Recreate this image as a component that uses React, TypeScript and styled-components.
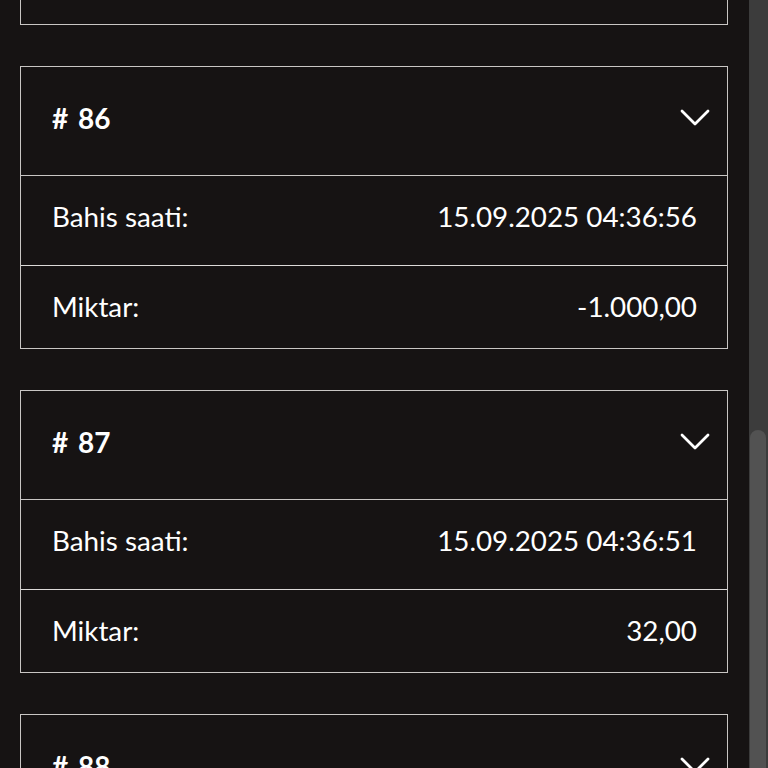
import React from 'react';
import styled, { createGlobalStyle } from 'styled-components';

const GlobalStyle = createGlobalStyle`
  html, body {
    margin: 0;
    padding: 0;
    height: 100%;
    overflow: hidden;
    background: #161313;
  }
  #root {
    height: 100%;
  }
`;

const Page = styled.div`
  display: flex;
  height: 768px;
  overflow: hidden;
  background: #161313;
  font-family: Lato, 'Noto Sans', sans-serif;
  color: #ffffff;
`;

const List = styled.div`
  flex: 1;
  display: flex;
  flex-direction: column;
  gap: 41px;
  padding: 0 21px 0 20px;
  margin-top: -258px;
`;

const Card = styled.div`
  border: 1px solid #c9c6c4;
  display: flex;
  flex-direction: column;
`;

const Header = styled.div`
  height: 109px;
  box-sizing: border-box;
  display: flex;
  align-items: center;
  justify-content: space-between;
  padding: 0 17px 6px 31px;
  border-bottom: 1px solid #c9c6c4;
  font-size: 28px;
  font-weight: 700;
  word-spacing: 3px;
`;

const Row = styled.div<{ $h: number; $shift: number; $last?: boolean }>`
  height: ${(p) => p.$h}px;
  box-sizing: border-box;
  display: flex;
  align-items: center;
  justify-content: space-between;
  padding: 0 30px ${(p) => p.$shift}px 31px;
  border-bottom: ${(p) => (p.$last ? 'none' : '1px solid #dcdad8')};
  font-size: 27.8px;
  font-weight: 400;
`;

const Chevron = styled.svg`
  width: 30px;
  height: 18px;
  display: block;
`;

const Scrollbar = styled.div`
  width: 19px;
  flex-shrink: 0;
  background: #3c3c3c;
  display: flex;
  flex-direction: column;
`;

const Thumb = styled.div`
  margin: 430px 2px 0 1px;
  flex: 1;
  background: #525252;
  border-radius: 8px 8px 0 0;
`;

type Bet = { id: number; time: string; amount: string };

const bets: Bet[] = [
  { id: 85, time: '15.09.2025 04:37:02', amount: '0,00' },
  { id: 86, time: '15.09.2025 04:36:56', amount: '-1.000,00' },
  { id: 87, time: '15.09.2025 04:36:51', amount: '32,00' },
  { id: 88, time: '15.09.2025 04:36:45', amount: '0,00' },
];

const BetCard: React.FC<{ bet: Bet }> = ({ bet }) => (
  <Card>
    <Header>
      <span># {bet.id}</span>
      <Chevron viewBox="0 0 30 18">
        <polyline points="2,2 15,15 28,2" fill="none" stroke="#fff" strokeWidth="2.8" strokeLinecap="round" strokeLinejoin="round" />
      </Chevron>
    </Header>
    <Row $h={90} $shift={9}>
      <span>Bahis saati:</span>
      <span>{bet.time}</span>
    </Row>
    <Row $h={82} $shift={2} $last>
      <span>Miktar:</span>
      <span>{bet.amount}</span>
    </Row>
  </Card>
);

export default function App() {
  return (
    <>
      <GlobalStyle />
      <Page>
        <List>
          {bets.map((b) => (
            <BetCard key={b.id} bet={b} />
          ))}
        </List>
        <Scrollbar>
          <Thumb />
        </Scrollbar>
      </Page>
    </>
  );
}
